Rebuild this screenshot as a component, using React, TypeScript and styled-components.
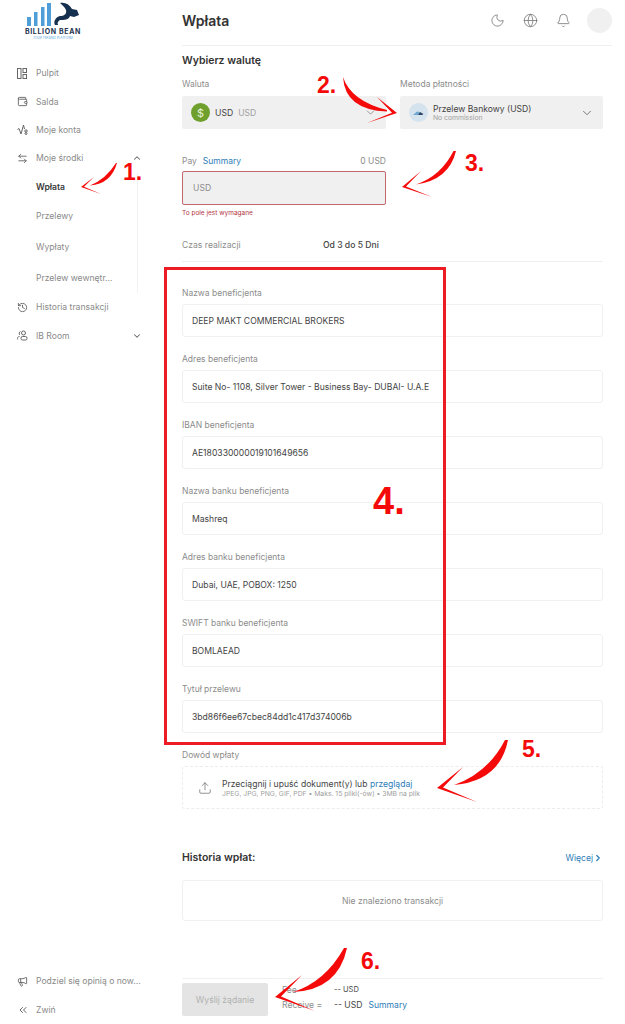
import React from 'react';
import styled, { createGlobalStyle } from 'styled-components';
import {
  ArrowLeftRight,
  Bell,
  ChevronDown,
  ChevronRight,
  ChevronsLeft,
  ChevronUp,
  Globe,
  History,
  Megaphone,
  Moon,
  Upload,
  Wallet,
} from 'lucide-react';

const GlobalStyle = createGlobalStyle`
  html, body {
    margin: 0;
    padding: 0;
    background: #fff;
    font-family: Inter, "Noto Sans", sans-serif;
  }
  * { box-sizing: border-box; }
`;

const Page = styled.div`
  position: relative;
  display: flex;
  width: 625px;
  height: 1024px;
  overflow: hidden;
  background: #fff;
  color: #3c3c3c;
`;

const Sidebar = styled.aside`
  flex: 0 0 182px;
  display: flex;
  flex-direction: column;
  padding-left: 17px;
`;

const Logo = styled.div`
  display: flex;
  flex-direction: column;
  align-items: center;
  width: 60px;
  height: 59px;
  margin-left: 6px;
  padding-top: 2px;
  svg { display: block; flex: none; }
`;

const LogoName = styled.span`
  font-size: 7px;
  line-height: 8px;
  font-weight: 700;
  letter-spacing: 0.65px;
  color: #1c3350;
  white-space: nowrap;
`;

const LogoTag = styled.span`
  font-size: 3px;
  line-height: 4px;
  color: #5aa5dc;
  white-space: nowrap;
`;

const Nav = styled.nav`
  display: flex;
  flex-direction: column;
  flex: 1;
`;

const NavItem = styled.div<{ $h?: number; $active?: boolean }>`
  display: flex;
  align-items: center;
  height: ${(p) => p.$h ?? 28.4}px;
  width: 125px;
  font-size: 8.6px;
  color: ${(p) => (p.$active ? '#3a3a3a' : '#8a8a8a')};
  font-weight: ${(p) => (p.$active ? 600 : 400)};
  white-space: nowrap;
  svg { flex: none; color: #666; }
`;

const NavIcon = styled.span`
  display: flex;
  width: 19px;
  flex: none;
`;

const NavLabel = styled.span`
  flex: 1;
`;

const SubList = styled.div`
  display: flex;
  flex-direction: column;
  border-right: 1px solid #f2f2f2;
  width: 121px;
`;

const SubItem = styled(NavItem)`
  padding-left: 19px;
  width: 120px;
`;

const SidebarFoot = styled.div`
  display: flex;
  flex-direction: column;
`;

const Main = styled.main`
  flex: 1;
  padding-right: 13px;
`;

const Header = styled.header`
  display: flex;
  align-items: center;
  justify-content: space-between;
  height: 46px;
  padding-bottom: 4px;
  border-bottom: 1px solid #efefef;
`;

const Title = styled.h1`
  margin: 0;
  font-size: 14px;
  font-weight: 600;
  color: #333;
`;

const HeaderTools = styled.div`
  display: flex;
  align-items: center;
  svg { color: #777; margin-right: 18px; }
`;

const Avatar = styled.div`
  width: 25px;
  height: 25px;
  border-radius: 50%;
  background: #f0f0f0;
  margin-left: -1.5px;
`;

const Content = styled.div`
  width: 421px;
`;

const Heading = styled.h2<{ $top?: number }>`
  margin: ${(p) => p.$top ?? 0}px 0 0;
  font-size: 10.5px;
  line-height: 14px;
  font-weight: 600;
  color: #333;
`;

const Columns = styled.div`
  display: grid;
  grid-template-columns: 204px 203px;
  column-gap: 14px;
`;

const Label = styled.div<{ $top?: number; $gap?: number }>`
  display: flex;
  align-items: center;
  height: 12px;
  padding-top: 2px;
  margin-top: ${(p) => p.$top ?? 0}px;
  margin-bottom: ${(p) => p.$gap ?? 6}px;
  font-size: 8.5px;
  color: #8c8c8c;
  white-space: nowrap;
`;

const Link = styled.span`
  color: #2d7db8;
`;

const PayLabel = styled(Label)`
  justify-content: space-between;
  width: 204px;
`;

const PayLink = styled(Link)`
  margin-left: 6px;
`;

const Select = styled.div`
  display: flex;
  align-items: center;
  height: 33px;
  padding: 0 9px;
  border-radius: 2px;
  background: #f0f0f0;
  font-size: 8.6px;
  color: #444;
`;

const CoinIcon = styled.div`
  display: flex;
  align-items: center;
  justify-content: center;
  width: 19px;
  height: 19px;
  margin-right: 5px;
  border-radius: 50%;
  background: #6fa02e;
  color: #e9f3dc;
  font-size: 11px;
`;

const BankIcon = styled.div`
  display: flex;
  align-items: center;
  justify-content: center;
  width: 19px;
  height: 19px;
  margin-right: 5px;
  border-radius: 50%;
  background: #d5e3ee;
`;

const Muted = styled.span`
  margin-left: 5px;
  color: #a0a0a0;
`;

const SelectText = styled.div`
  flex: 1;
  display: flex;
  flex-direction: column;
  line-height: 10px;
`;

const Tiny = styled.span`
  font-size: 6.8px;
  line-height: 8px;
  color: #a0a0a0;
`;

const Grow = styled.span`
  flex: 1;
`;

const ErrorInput = styled.div`
  display: flex;
  align-items: center;
  width: 204px;
  height: 34px;
  padding-left: 10px;
  border: 1px solid #c2676c;
  border-radius: 2px;
  background: #f0f0f0;
  font-size: 8.6px;
  color: #8c8c8c;
`;

const ErrorText = styled.div`
  margin-top: 4px;
  font-size: 6.5px;
  line-height: 8px;
  color: #b3343c;
`;

const EtaRow = styled.div`
  display: flex;
  align-items: center;
  height: 17px;
  margin-top: 19px;
  font-size: 8.6px;
  color: #8c8c8c;
`;

const EtaName = styled.span`
  width: 141px;
`;

const EtaValue = styled.span`
  color: #444;
  font-weight: 500;
`;

const Divider = styled.div`
  height: 1px;
  margin-top: 8px;
  background: #eeeeee;
`;

const Field = styled.div`
  display: flex;
  flex-direction: column;
  margin-top: 24px;
  & + & { margin-top: 15px; }
`;

const FieldBox = styled.div`
  display: flex;
  align-items: center;
  height: 33px;
  padding-left: 9px;
  border: 1px solid #f0f0f0;
  border-radius: 3px;
  font-size: 8.6px;
  color: #444;
  white-space: nowrap;
`;

const DropZone = styled.div`
  display: flex;
  align-items: center;
  height: 43px;
  padding-left: 15px;
  border: 1px dashed #ececec;
  border-radius: 3px;
  svg { color: #666; margin-right: 10px; }
`;

const DropText = styled.div`
  display: flex;
  flex-direction: column;
  font-size: 8.6px;
  line-height: 12px;
  color: #444;
  white-space: nowrap;
`;

const HistoryHead = styled.div`
  display: flex;
  align-items: center;
  justify-content: space-between;
  margin-top: 42px;
  height: 14px;
`;

const MoreLink = styled(Link)`
  display: flex;
  align-items: center;
  font-size: 8.6px;
`;

const EmptyBox = styled.div`
  display: flex;
  align-items: center;
  justify-content: center;
  height: 41px;
  margin-top: 15px;
  border: 1px solid #f0f0f0;
  border-radius: 3px;
  font-size: 8.6px;
  color: #8c8c8c;
`;

const Footer = styled.div`
  display: flex;
  align-items: center;
  margin-top: 57px;
  padding-top: 4px;
  border-top: 1px solid #f0f0f0;
`;

const SubmitButton = styled.div`
  display: flex;
  align-items: center;
  justify-content: center;
  width: 86px;
  height: 33px;
  border-radius: 2px;
  background: #e4e4e4;
  font-size: 8.6px;
  color: #b0b0b0;
`;

const Totals = styled.div`
  display: grid;
  grid-template-columns: 52px auto;
  margin-left: 14px;
  padding-bottom: 4px;
  align-content: center;
  row-gap: 5px;
  font-size: 8.6px;
  line-height: 10px;
  color: #8c8c8c;
`;

const TotalValue = styled.span<{ $small?: boolean }>`
  color: #444;
  font-size: ${(p) => (p.$small ? 7.5 : 8.6)}px;
`;

const Highlight = styled.div`
  position: absolute;
  left: 164px;
  top: 267px;
  width: 282px;
  height: 478px;
  border: 3px solid #ed1c24;
  pointer-events: none;
`;

const Marks = styled.svg`
  position: absolute;
  inset: 0;
  pointer-events: none;
`;

const Step = styled.span<{ $x: number; $y: number; $big?: boolean }>`
  position: absolute;
  left: ${(p) => p.$x}px;
  top: ${(p) => p.$y}px;
  font-family: "Liberation Sans", Arial, sans-serif;
  font-weight: 700;
  font-size: ${(p) => (p.$big ? 38 : 23)}px;
  line-height: 1;
  color: #f50a0a;
`;

const DashboardIcon = () => (
  <svg width="10" height="11" viewBox="0 0 10 11" fill="none" stroke="#666" strokeWidth="1">
    <rect x="0.5" y="0.5" width="3.5" height="10" />
    <rect x="6" y="0.5" width="3.5" height="4" />
    <rect x="6" y="6.5" width="3.5" height="4" />
  </svg>
);

const AccountsIcon = () => (
  <svg width="11" height="11" viewBox="0 0 11 11" fill="none" stroke="#666" strokeWidth="1">
    <path d="M0.5 5.5 L2 4.5 L4 10 L6.5 1 L7.5 5" />
    <circle cx="9" cy="7" r="1.2" />
    <circle cx="9" cy="9.5" r="1" />
  </svg>
);

const RoomIcon = () => (
  <svg width="11" height="11" viewBox="0 0 11 11" fill="none" stroke="#666" strokeWidth="1">
    <circle cx="6.5" cy="3" r="2" />
    <rect x="4" y="6.5" width="6" height="3.5" rx="1.5" />
    <path d="M3.5 1.5 A2 2 0 0 0 3 5 M2.5 6.5 A2 2 0 0 0 0.7 9.5" />
  </svg>
);

const BrandMark = () => (
  <svg width="60" height="26" viewBox="0 0 60 26">
    <rect x="4" y="15" width="4" height="9" fill="#4f9ed8" />
    <rect x="11" y="10" width="3.5" height="14" fill="#4f9ed8" />
    <rect x="18" y="5" width="3.5" height="19" fill="#4f9ed8" />
    <rect x="24" y="1" width="4" height="23" fill="#4f9ed8" />
    <path
      fill="#16314f"
      d="M37 1 C42 0 46 2 49 7 L54 8 L56 13 L51 15 L47 14 C46 18 41 18 37 18 C35 19 34 21 35 23 L32 23 C30 19 33 15 37 14 C41 14 44 12 43 8 C42 5 39 3 37 1 Z"
    />
  </svg>
);

const BankMark = () => (
  <svg width="11" height="6" viewBox="0 0 11 6">
    <path d="M0 5 L4 1.5 L7 2 L5 5 Z" fill="#6fa6d2" />
    <path d="M5 5 L7 2 L10.5 4 L9 5 Z" fill="#2c4766" />
  </svg>
);

const arrows = [
  { body: 'M117 163 Q111 184 90 185.5 Q106 179 116 163 Z', head: 'M81 187 L94 177 L84 186.7 L101 194 Z' },
  { body: 'M343 77 Q351 101 387 110 L387 111.5 Q345 110 343 77 Z', head: 'M397 113 L377 97 L392 112.7 L367 123 Z' },
  { body: 'M456 151 Q449 180 416 184.5 Q441 176 453.5 151 Z', head: 'M402 187 L421 171 L406 186.5 L432 197 Z' },
  { body: 'M508 740 Q500 781 454 785 Q488 773 505 740 Z', head: 'M437 788 L463 767 L443 787.5 L477 802 Z' },
  { body: 'M347 948 Q338 990 293 992 Q325 982 344 948 Z', head: 'M275 997 L302 975 L281 996.5 L315 1011 Z' },
];

const beneficiary = [
  ['Nazwa beneficjenta', 'DEEP MAKT COMMERCIAL BROKERS'],
  ['Adres beneficjenta', 'Suite No- 1108, Silver Tower - Business Bay- DUBAI- U.A.E'],
  ['IBAN beneficjenta', 'AE180330000019101649656'],
  ['Nazwa banku beneficjenta', 'Mashreq'],
  ['Adres banku beneficjenta', 'Dubai, UAE, POBOX: 1250'],
  ['SWIFT banku beneficjenta', 'BOMLAEAD'],
  ['Tytuł przelewu', '3bd86f6ee67cbec84dd1c417d374006b'],
];

const App = () => {
  return (
    <Page>
      <GlobalStyle />
      <Sidebar>
        <Logo>
          <BrandMark />
          <LogoName>BILLION BEAN</LogoName>
          <LogoTag>YOUR TRADING PLATFORM</LogoTag>
        </Logo>
        <Nav>
          <NavItem><NavIcon><DashboardIcon /></NavIcon><NavLabel>Pulpit</NavLabel></NavItem>
          <NavItem><NavIcon><Wallet size={11} /></NavIcon><NavLabel>Salda</NavLabel></NavItem>
          <NavItem><NavIcon><AccountsIcon /></NavIcon><NavLabel>Moje konta</NavLabel></NavItem>
          <NavItem>
            <NavIcon><ArrowLeftRight size={11} /></NavIcon>
            <NavLabel>Moje środki</NavLabel>
            <ChevronUp size={10} strokeWidth={2.5} />
          </NavItem>
          <SubList>
            <SubItem $active>Wpłata</SubItem>
            <SubItem $h={31}>Przelewy</SubItem>
            <SubItem $h={30.5}>Wypłaty</SubItem>
            <SubItem $h={30.5}>Przelew wewnętr...</SubItem>
          </SubList>
          <NavItem><NavIcon><History size={11} /></NavIcon><NavLabel>Historia transakcji</NavLabel></NavItem>
          <NavItem>
            <NavIcon><RoomIcon /></NavIcon>
            <NavLabel>IB Room</NavLabel>
            <ChevronDown size={10} strokeWidth={2.5} />
          </NavItem>
        </Nav>
        <SidebarFoot>
          <NavItem><NavIcon><Megaphone size={11} /></NavIcon><NavLabel>Podziel się opinią o now...</NavLabel></NavItem>
          <NavItem><NavIcon><ChevronsLeft size={12} /></NavIcon><NavLabel>Zwiń</NavLabel></NavItem>
        </SidebarFoot>
      </Sidebar>

      <Main>
        <Header>
          <Title>Wpłata</Title>
          <HeaderTools>
            <Moon size={15} strokeWidth={1.3} />
            <Globe size={15} strokeWidth={1.3} />
            <Bell size={15} strokeWidth={1.3} />
            <Avatar />
          </HeaderTools>
        </Header>
        <Content>
          <Heading $top={8}>Wybierz walutę</Heading>
          <Columns>
            <div>
              <Label $top={9} $gap={7}>Waluta</Label>
              <Select>
                <CoinIcon>$</CoinIcon>
                USD<Muted>USD</Muted>
                <Grow />
                <ChevronDown size={13} strokeWidth={1.5} color="#888" />
              </Select>
            </div>
            <div>
              <Label $top={9} $gap={7}>Metoda płatności</Label>
              <Select>
                <BankIcon><BankMark /></BankIcon>
                <SelectText>
                  <span>Przelew Bankowy (USD)</span>
                  <Tiny>No commission</Tiny>
                </SelectText>
                <ChevronDown size={14} strokeWidth={1.5} color="#666" />
              </Select>
            </div>
          </Columns>
          <PayLabel $top={25} $gap={5}>
            <div>Pay<PayLink>Summary</PayLink></div>
            <span>0 USD</span>
          </PayLabel>
          <ErrorInput>USD</ErrorInput>
          <ErrorText>To pole jest wymagane</ErrorText>
          <EtaRow>
            <EtaName>Czas realizacji</EtaName>
            <EtaValue>Od 3 do 5 Dni</EtaValue>
          </EtaRow>
          <Divider />
          {beneficiary.map(([label, value]) => (
            <Field key={label}>
              <Label>{label}</Label>
              <FieldBox>{value}</FieldBox>
            </Field>
          ))}
          <Field>
            <Label>Dowód wpłaty</Label>
            <DropZone>
              <Upload size={14} strokeWidth={1.2} />
              <DropText>
                <span>Przeciągnij i upuść dokument(y) lub <Link>przeglądaj</Link></span>
                <Tiny>JPEG, JPG, PNG, GIF, PDF • Maks. 15 pliki(-ów) • 3MB na plik</Tiny>
              </DropText>
            </DropZone>
          </Field>
          <HistoryHead>
            <Heading>Historia wpłat:</Heading>
            <MoreLink>Więcej <ChevronRight size={10} strokeWidth={3} /></MoreLink>
          </HistoryHead>
          <EmptyBox>Nie znaleziono transakcji</EmptyBox>
          <Footer>
            <SubmitButton>Wyślij żądanie</SubmitButton>
            <Totals>
              <span>Fee</span>
              <TotalValue $small>-- USD</TotalValue>
              <span>Receive =</span>
              <TotalValue>-- USD<PayLink>Summary</PayLink></TotalValue>
            </Totals>
          </Footer>
        </Content>
      </Main>

      <Highlight />
      <Marks width="625" height="1024" viewBox="0 0 625 1024">
        {arrows.map((a) => (
          <g key={a.body} fill="#f50a0a">
            <path d={a.body} />
            <path d={a.head} />
          </g>
        ))}
      </Marks>
      <Step $x={123} $y={161}>1.</Step>
      <Step $x={317} $y={74}>2.</Step>
      <Step $x={465} $y={152}>3.</Step>
      <Step $x={373} $y={482} $big>4.</Step>
      <Step $x={522} $y={738}>5.</Step>
      <Step $x={361} $y={950}>6.</Step>
    </Page>
  );
};

export default App;
